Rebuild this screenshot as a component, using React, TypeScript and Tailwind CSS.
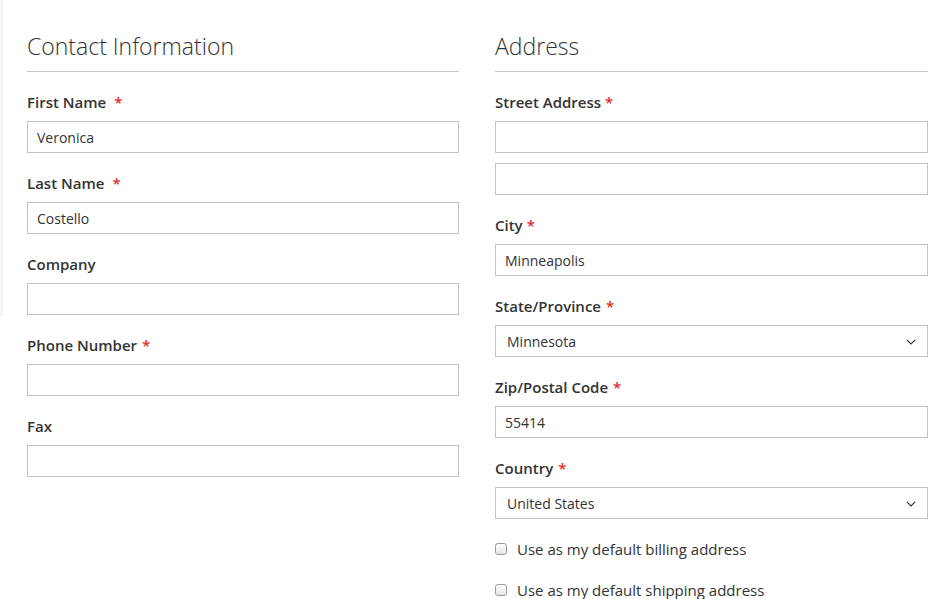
import { ChangeEvent, useState } from 'react'

const contactFields = [
  { label: 'First Name', value: 'Veronica', required: true, gap: 'ml-[8px]' },
  { label: 'Last Name', value: 'Costello', required: true, gap: 'ml-[8px]' },
  { label: 'Company', value: '', required: false, gap: '' },
  { label: 'Phone Number', value: '', required: true, gap: 'ml-[5px]' },
  { label: 'Fax', value: '', required: false, gap: '' }
]

const font = { fontFamily: '"Open Sans", "Noto Sans", Arial, sans-serif' }

function Label({ text, required, gap = 'ml-[5px]' }: { text: string; required?: boolean; gap?: string }) {
  return (
    <div className="text-[15px] leading-[18px] font-semibold text-[#333] mb-[10px]">
      {text}
      {required && <span className={`text-[#e02b27] ${gap}`}>*</span>}
    </div>
  )
}

function TextInput({ value }: { value: string }) {
  const [val, setVal] = useState(value)
  return (
    <input
      value={val}
      onChange={(e: ChangeEvent<HTMLInputElement>) => setVal(e.target.value)}
      className="block w-full h-[32px] border border-[#c2c2c2] bg-white px-[9px] text-[14px] text-[#333] outline-none"
      style={font}
    />
  )
}

function Select({ value }: { value: string }) {
  return (
    <div className="relative h-[32px] border border-[#c2c2c2] bg-white flex items-center pl-[11px] text-[14px] text-[#333]">
      {value}
      <svg className="absolute right-[11px] top-[13px] w-[10px] h-[6px]" viewBox="0 0 10 6" fill="none">
        <path d="M0.8 0.8 L5 5 L9.2 0.8" stroke="#333" strokeWidth="1.2" />
      </svg>
    </div>
  )
}

function Heading({ children }: { children: string }) {
  return (
    <div className="mt-[32px] text-[23px] leading-[28px] font-light text-[#333] pb-[11px] border-b border-[#c6c6c6] mb-[21px]">
      {children}
    </div>
  )
}

function Checkbox({ label }: { label: string }) {
  return (
    <label className="flex items-center text-[15px] leading-[20px] text-[#333]">
      <span className="w-[12px] h-[12px] mr-[10px] rounded-[3px] border border-[#9a9a9a] bg-gradient-to-b from-white to-[#e6e6e6]"></span>
      {label}
    </label>
  )
}

export default function App() {
  return (
    <div className="relative bg-white w-[940px] h-[599px] overflow-hidden" style={font}>
      <div className="absolute left-0 top-0 w-[3px] h-[316px] bg-[#f4f4f4]"></div>

      <div className="grid grid-cols-[432px_1fr] gap-[36px] pl-[27px] pr-[12px]">
        {/* Contact Information */}
        <div>
          <Heading>Contact Information</Heading>
          <div className="flex flex-col gap-[21px]">
            {contactFields.map((field) => (
              <div key={field.label}>
                <Label text={field.label} required={field.required} gap={field.gap} />
                <TextInput value={field.value} />
              </div>
            ))}
          </div>
        </div>

        {/* Address */}
        <div>
          <Heading>Address</Heading>
          <div className="flex flex-col gap-[21px]">
            <div>
              <Label text="Street Address" required gap="ml-[4px]" />
              <div className="flex flex-col gap-[10px]">
                <TextInput value="" />
                <TextInput value="" />
              </div>
            </div>
            <div>
              <Label text="City" required gap="ml-[4px]" />
              <TextInput value="Minneapolis" />
            </div>
            <div>
              <Label text="State/Province" required gap="ml-[5px]" />
              <Select value="Minnesota" />
            </div>
            <div>
              <Label text="Zip/Postal Code" required gap="ml-[5px]" />
              <TextInput value="55414" />
            </div>
            <div>
              <Label text="Country" required gap="ml-[5px]" />
              <Select value="United States" />
            </div>
          </div>
          <div className="flex flex-col gap-[21px] mt-[20px]">
            <Checkbox label="Use as my default billing address" />
            <Checkbox label="Use as my default shipping address" />
          </div>
        </div>
      </div>
    </div>
  )
}
